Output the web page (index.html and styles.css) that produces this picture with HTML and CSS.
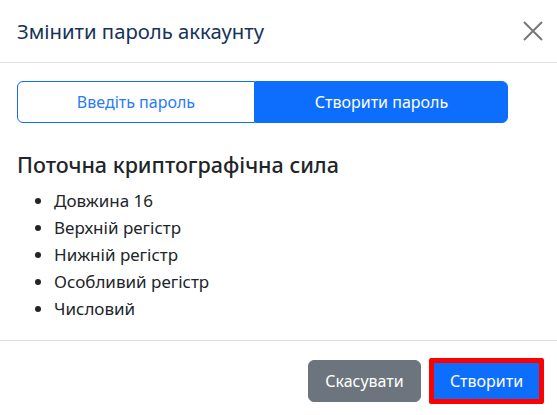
FILE: index.html
```html
<!DOCTYPE html>
<html lang="uk">
<head>
<meta charset="utf-8">
<title>Змінити пароль аккаунту</title>
<link rel="stylesheet" href="styles.css">
</head>
<body>
<div class="modal">
  <div class="modal-header">
    <h4 class="modal-title">Змінити пароль аккаунту</h4>
    <button class="btn-close" aria-label="Close">
      <svg width="20" height="20" viewBox="0 0 20 20"><path d="M1 1 L19 19 M19 1 L1 19" stroke="#777" stroke-width="2" fill="none"/></svg>
    </button>
  </div>
  <div class="modal-body">
    <div class="btn-group">
      <button class="seg seg-outline">Введіть пароль</button>
      <button class="seg seg-active">Створити пароль</button>
    </div>
    <h5 class="strength-title">Поточна криптографічна сила</h5>
    <ul class="strength-list">
      <li>Довжина 16</li>
      <li>Верхній регістр</li>
      <li>Нижній регістр</li>
      <li>Особливий регістр</li>
      <li>Числовий</li>
    </ul>
  </div>
  <div class="modal-footer">
    <button class="btn btn-secondary">Скасувати</button>
    <button class="btn btn-primary highlighted">Створити</button>
  </div>
</div>
</body>
</html>
```
FILE: styles.css
```css
html, body {
  margin: 0;
  padding: 0;
  background: #fff;
}
body {
  font-family: "Noto Sans", "Open Sans", sans-serif;
  color: #212529;
  font-size: 16px;
}
.modal {
  width: 557px;
  background: #fff;
}
.modal-header {
  display: flex;
  align-items: center;
  justify-content: space-between;
  padding: 16px 14px 16px 17px;
  border-bottom: 1px solid #dee2e6;
}
.modal-title {
  margin: 0;
  font-size: 20.3px;
  font-weight: 400;
  line-height: 30px;
  color: #16335a;
}
.btn-close {
  border: 0;
  background: transparent;
  padding: 0;
  width: 20px;
  height: 20px;
  margin-right: 0;
  display: flex;
}
.modal-body {
  padding: 18px 17px 0 17px;
}
.btn-group {
  display: flex;
  width: 491px;
}
.seg {
  flex: 1 1 auto;
  font-family: inherit;
  font-size: 16px;
  line-height: 24px;
  padding: 8px 12px;
  border: 1px solid #0d6efd;
  margin: 0;
}
.seg-outline {
  background: #fff;
  color: #2a7bfb;
  border-radius: 6px 0 0 6px;
}
.seg-active {
  background: #0d6efd;
  color: #fff;
  border-radius: 0 6px 6px 0;
}
.strength-title {
  margin: 30px 0 10px 0;
  font-size: 21.5px;
  font-weight: 500;
  line-height: 24px;
}
.strength-list {
  margin: 0;
  padding-left: 37px;
  padding-bottom: 18px;
}
.strength-list li {
  line-height: 27px;
  font-size: 17px;
}
.modal-footer {
  display: flex;
  justify-content: flex-end;
  align-items: center;
  gap: 8px;
  border-top: 1px solid #dee2e6;
  padding: 17px 13px 12px 12px;
}
.btn {
  font-family: inherit;
  font-size: 16px;
  line-height: 24px;
  color: #fff;
  margin: 0;
}
.btn-secondary {
  background: #6c757d;
  border: 1px solid #6c757d;
  border-radius: 6px;
  padding: 8px 14px;
  width: 113px;
}
.btn-primary {
  background: #0d6efd;
}
.highlighted {
  border: 5px solid #ff0000;
  border-radius: 2px;
  padding: 6px 12px;
  width: 115px;
}
```
